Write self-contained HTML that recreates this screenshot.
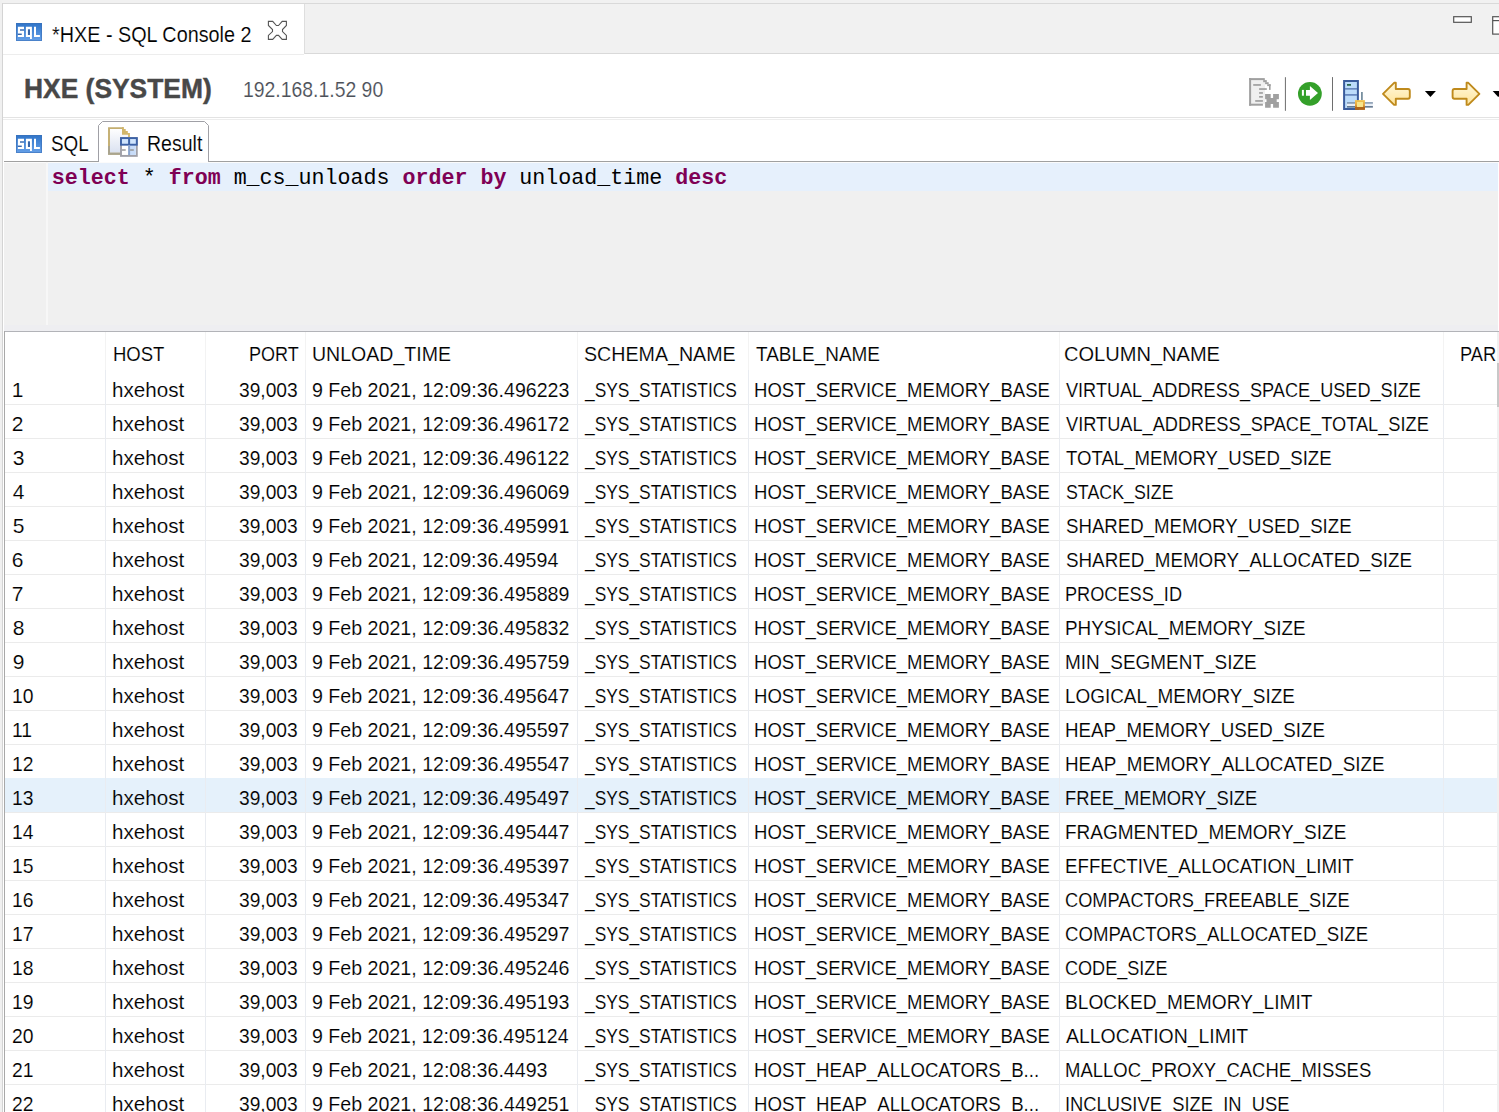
<!DOCTYPE html>
<html><head><meta charset="utf-8"><style>
html,body{margin:0;padding:0;}
body{width:1499px;height:1112px;overflow:hidden;position:relative;background:#fff;font-family:'Liberation Sans', sans-serif;}
.t{position:absolute;white-space:nowrap;line-height:1;transform-origin:0 0;}
.vl{position:absolute;width:1px;background:#e9ecf1;}
.hl{position:absolute;left:5px;width:1494px;height:1px;background:#ebebeb;}
.a{position:absolute;}
</style></head><body>
<!-- tab strip -->
<div class="a" style="left:0;top:0;width:1499px;height:54px;background:#f1f1f1"></div>
<div class="a" style="left:2px;top:3px;width:1497px;height:1px;background:#d9d9d9"></div>
<div class="a" style="left:3px;top:4px;width:301px;height:50px;background:#fff"></div>
<div class="a" style="left:304px;top:4px;width:1px;height:50px;background:#dedede"></div>
<div class="a" style="left:305px;top:53px;width:1194px;height:1px;background:#d9d9d9"></div>
<div class="a" style="left:3px;top:54px;width:301px;height:1px;background:#ededed"></div>
<!-- left frame -->
<div class="a" style="left:0;top:0;width:2px;height:1112px;background:#f0f0f0"></div>
<div class="a" style="left:2px;top:3px;width:1px;height:1109px;background:#d4d4d4"></div>
<!-- header lines -->
<div class="a" style="left:3px;top:117px;width:1496px;height:1px;background:#e3e3e3"></div>
<div class="a" style="left:3px;top:119px;width:1496px;height:1px;background:#ededed"></div>
<!-- subtab bar bottom line -->
<div class="a" style="left:4px;top:161px;width:1495px;height:1px;background:#a0a0a0"></div>
<!-- result tab -->
<svg class="a" style="left:0;top:0" width="300" height="170"><path d="M98.5 162 V125.5 L102.5 121.5 H204.5 L208.5 125.5 V162" fill="#fff" stroke="#a0a0a6" stroke-width="1"/></svg>
<!-- editor -->
<div class="a" style="left:4px;top:162px;width:1494px;height:168px;background:#f0f0f0"></div>
<div class="a" style="left:4px;top:162px;width:1494px;height:1px;background:#fbfbfb"></div>
<div class="a" style="left:48px;top:163px;width:1450px;height:28px;background:#e6f0fc"></div>
<div class="a" style="left:46px;top:162px;width:2px;height:163px;background:#f7f7f7"></div>
<div class="a" style="left:4px;top:325px;width:1494px;height:6px;background:#eeeef1"></div>
<!-- table -->
<div class="a" style="left:4px;top:331px;width:1495px;height:1px;background:#b2b3b8"></div>
<div class="a" style="left:4px;top:331px;width:1px;height:781px;background:#a8a8a8"></div>
<div class="hl" style="top:404px"></div><div class="hl" style="top:438px"></div><div class="hl" style="top:472px"></div><div class="hl" style="top:506px"></div><div class="hl" style="top:540px"></div><div class="hl" style="top:574px"></div><div class="hl" style="top:608px"></div><div class="hl" style="top:642px"></div><div class="hl" style="top:676px"></div><div class="hl" style="top:710px"></div><div class="hl" style="top:744px"></div><div class="hl" style="top:778px"></div><div class="hl" style="top:812px"></div><div class="hl" style="top:846px"></div><div class="hl" style="top:880px"></div><div class="hl" style="top:914px"></div><div class="hl" style="top:948px"></div><div class="hl" style="top:982px"></div><div class="hl" style="top:1016px"></div><div class="hl" style="top:1050px"></div><div class="hl" style="top:1084px"></div><div class="hl" style="top:1118px"></div>
<div style="position:absolute;left:5px;top:778px;width:1494px;height:34px;background:#e5f1fb"></div>
<div class="vl" style="left:105px;top:332px;height:38px;background:#f3f3f3"></div><div class="vl" style="left:105px;top:370px;height:742px"></div><div class="vl" style="left:205px;top:332px;height:38px;background:#f3f3f3"></div><div class="vl" style="left:205px;top:370px;height:742px"></div><div class="vl" style="left:305px;top:332px;height:38px;background:#f3f3f3"></div><div class="vl" style="left:305px;top:370px;height:742px"></div><div class="vl" style="left:577px;top:332px;height:38px;background:#f3f3f3"></div><div class="vl" style="left:577px;top:370px;height:742px"></div><div class="vl" style="left:748px;top:332px;height:38px;background:#f3f3f3"></div><div class="vl" style="left:748px;top:370px;height:742px"></div><div class="vl" style="left:1059px;top:332px;height:38px;background:#f3f3f3"></div><div class="vl" style="left:1059px;top:370px;height:742px"></div><div class="vl" style="left:1443px;top:332px;height:38px;background:#f3f3f3"></div><div class="vl" style="left:1443px;top:370px;height:742px"></div>
<div class="t" style="left:52.00px;top:23.88px;font-size:22px;font-weight:normal;color:#000;-webkit-text-stroke:0.15px #fff;transform:scaleX(0.8996);">*HXE - SQL Console 2</div><div class="t" style="left:24.36px;top:75.00px;font-size:28px;font-weight:bold;color:#484848;-webkit-text-stroke:0.45px #484848;transform:scaleX(0.9425);">HXE (SYSTEM)</div><div class="t" style="left:243.30px;top:79.80px;font-size:21.5px;font-weight:normal;color:#4c5058;-webkit-text-stroke:0.15px #fff;transform:scaleX(0.9018);">192.168.1.52 90</div><div class="t" style="left:51.44px;top:133.38px;font-size:22px;font-weight:normal;color:#000;-webkit-text-stroke:0.15px #fff;transform:scaleX(0.8554);">SQL</div><div class="t" style="left:146.61px;top:133.38px;font-size:22px;font-weight:normal;color:#000;-webkit-text-stroke:0.15px #fff;transform:scaleX(0.8882);">Result</div><div class="t" style="left:112.92px;top:343.02px;font-size:21px;font-weight:normal;color:#000;-webkit-text-stroke:0.15px #fff;transform:scaleX(0.8816);">HOST</div><div class="t" style="left:249.04px;top:343.02px;font-size:21px;font-weight:normal;color:#000;-webkit-text-stroke:0.15px #fff;transform:scaleX(0.8577);">PORT</div><div class="t" style="left:311.57px;top:343.02px;font-size:21px;font-weight:normal;color:#000;-webkit-text-stroke:0.15px #fff;transform:scaleX(0.9302);">UNLOAD_TIME</div><div class="t" style="left:584.20px;top:343.02px;font-size:21px;font-weight:normal;color:#000;-webkit-text-stroke:0.15px #fff;transform:scaleX(0.9347);">SCHEMA_NAME</div><div class="t" style="left:756.00px;top:343.02px;font-size:21px;font-weight:normal;color:#000;-webkit-text-stroke:0.15px #fff;transform:scaleX(0.9030);">TABLE_NAME</div><div class="t" style="left:1064.25px;top:343.02px;font-size:21px;font-weight:normal;color:#000;-webkit-text-stroke:0.15px #fff;transform:scaleX(0.9547);">COLUMN_NAME</div><div class="t" style="left:1459.73px;top:343.02px;font-size:21px;font-weight:normal;color:#000;-webkit-text-stroke:0.15px #fff;transform:scaleX(0.8701);">PAR</div><div class="t" style="left:11.80px;top:379.02px;font-size:21px;font-weight:normal;color:#000;-webkit-text-stroke:0.15px #fff;">1</div><div class="t" style="left:112.22px;top:379.02px;font-size:21px;font-weight:normal;color:#000;-webkit-text-stroke:0.15px #fff;transform:scaleX(0.9819);">hxehost</div><div class="t" style="left:238.70px;top:379.02px;font-size:21px;font-weight:normal;color:#000;-webkit-text-stroke:0.15px #fff;transform:scaleX(0.9142);">39,003</div><div class="t" style="left:312.20px;top:379.02px;font-size:21px;font-weight:normal;color:#000;-webkit-text-stroke:0.15px #fff;transform:scaleX(0.9342);">9 Feb 2021, 12:09:36.496223</div><div class="t" style="left:585.13px;top:379.02px;font-size:21px;font-weight:normal;color:#000;-webkit-text-stroke:0.15px #fff;transform:scaleX(0.8272);">_SYS_STATISTICS</div><div class="t" style="left:754.32px;top:379.02px;font-size:21px;font-weight:normal;color:#000;-webkit-text-stroke:0.15px #fff;transform:scaleX(0.8824);">HOST_SERVICE_MEMORY_BASE</div><div class="t" style="left:1065.60px;top:379.02px;font-size:21px;font-weight:normal;color:#000;-webkit-text-stroke:0.15px #fff;transform:scaleX(0.8629);">VIRTUAL_ADDRESS_SPACE_USED_SIZE</div><div class="t" style="left:11.80px;top:413.02px;font-size:21px;font-weight:normal;color:#000;-webkit-text-stroke:0.15px #fff;">2</div><div class="t" style="left:112.22px;top:413.02px;font-size:21px;font-weight:normal;color:#000;-webkit-text-stroke:0.15px #fff;transform:scaleX(0.9819);">hxehost</div><div class="t" style="left:238.70px;top:413.02px;font-size:21px;font-weight:normal;color:#000;-webkit-text-stroke:0.15px #fff;transform:scaleX(0.9142);">39,003</div><div class="t" style="left:312.20px;top:413.02px;font-size:21px;font-weight:normal;color:#000;-webkit-text-stroke:0.15px #fff;transform:scaleX(0.9342);">9 Feb 2021, 12:09:36.496172</div><div class="t" style="left:585.13px;top:413.02px;font-size:21px;font-weight:normal;color:#000;-webkit-text-stroke:0.15px #fff;transform:scaleX(0.8272);">_SYS_STATISTICS</div><div class="t" style="left:754.32px;top:413.02px;font-size:21px;font-weight:normal;color:#000;-webkit-text-stroke:0.15px #fff;transform:scaleX(0.8824);">HOST_SERVICE_MEMORY_BASE</div><div class="t" style="left:1065.60px;top:413.02px;font-size:21px;font-weight:normal;color:#000;-webkit-text-stroke:0.15px #fff;transform:scaleX(0.8667);">VIRTUAL_ADDRESS_SPACE_TOTAL_SIZE</div><div class="t" style="left:12.80px;top:447.02px;font-size:21px;font-weight:normal;color:#000;-webkit-text-stroke:0.15px #fff;">3</div><div class="t" style="left:112.22px;top:447.02px;font-size:21px;font-weight:normal;color:#000;-webkit-text-stroke:0.15px #fff;transform:scaleX(0.9819);">hxehost</div><div class="t" style="left:238.70px;top:447.02px;font-size:21px;font-weight:normal;color:#000;-webkit-text-stroke:0.15px #fff;transform:scaleX(0.9142);">39,003</div><div class="t" style="left:312.20px;top:447.02px;font-size:21px;font-weight:normal;color:#000;-webkit-text-stroke:0.15px #fff;transform:scaleX(0.9342);">9 Feb 2021, 12:09:36.496122</div><div class="t" style="left:585.13px;top:447.02px;font-size:21px;font-weight:normal;color:#000;-webkit-text-stroke:0.15px #fff;transform:scaleX(0.8272);">_SYS_STATISTICS</div><div class="t" style="left:754.32px;top:447.02px;font-size:21px;font-weight:normal;color:#000;-webkit-text-stroke:0.15px #fff;transform:scaleX(0.8824);">HOST_SERVICE_MEMORY_BASE</div><div class="t" style="left:1065.60px;top:447.02px;font-size:21px;font-weight:normal;color:#000;-webkit-text-stroke:0.15px #fff;transform:scaleX(0.8856);">TOTAL_MEMORY_USED_SIZE</div><div class="t" style="left:12.80px;top:481.02px;font-size:21px;font-weight:normal;color:#000;-webkit-text-stroke:0.15px #fff;">4</div><div class="t" style="left:112.22px;top:481.02px;font-size:21px;font-weight:normal;color:#000;-webkit-text-stroke:0.15px #fff;transform:scaleX(0.9819);">hxehost</div><div class="t" style="left:238.70px;top:481.02px;font-size:21px;font-weight:normal;color:#000;-webkit-text-stroke:0.15px #fff;transform:scaleX(0.9142);">39,003</div><div class="t" style="left:312.20px;top:481.02px;font-size:21px;font-weight:normal;color:#000;-webkit-text-stroke:0.15px #fff;transform:scaleX(0.9342);">9 Feb 2021, 12:09:36.496069</div><div class="t" style="left:585.13px;top:481.02px;font-size:21px;font-weight:normal;color:#000;-webkit-text-stroke:0.15px #fff;transform:scaleX(0.8272);">_SYS_STATISTICS</div><div class="t" style="left:754.32px;top:481.02px;font-size:21px;font-weight:normal;color:#000;-webkit-text-stroke:0.15px #fff;transform:scaleX(0.8824);">HOST_SERVICE_MEMORY_BASE</div><div class="t" style="left:1065.60px;top:481.02px;font-size:21px;font-weight:normal;color:#000;-webkit-text-stroke:0.15px #fff;transform:scaleX(0.8478);">STACK_SIZE</div><div class="t" style="left:12.80px;top:515.02px;font-size:21px;font-weight:normal;color:#000;-webkit-text-stroke:0.15px #fff;">5</div><div class="t" style="left:112.22px;top:515.02px;font-size:21px;font-weight:normal;color:#000;-webkit-text-stroke:0.15px #fff;transform:scaleX(0.9819);">hxehost</div><div class="t" style="left:238.70px;top:515.02px;font-size:21px;font-weight:normal;color:#000;-webkit-text-stroke:0.15px #fff;transform:scaleX(0.9142);">39,003</div><div class="t" style="left:312.20px;top:515.02px;font-size:21px;font-weight:normal;color:#000;-webkit-text-stroke:0.15px #fff;transform:scaleX(0.9342);">9 Feb 2021, 12:09:36.495991</div><div class="t" style="left:585.13px;top:515.02px;font-size:21px;font-weight:normal;color:#000;-webkit-text-stroke:0.15px #fff;transform:scaleX(0.8272);">_SYS_STATISTICS</div><div class="t" style="left:754.32px;top:515.02px;font-size:21px;font-weight:normal;color:#000;-webkit-text-stroke:0.15px #fff;transform:scaleX(0.8824);">HOST_SERVICE_MEMORY_BASE</div><div class="t" style="left:1065.60px;top:515.02px;font-size:21px;font-weight:normal;color:#000;-webkit-text-stroke:0.15px #fff;transform:scaleX(0.8878);">SHARED_MEMORY_USED_SIZE</div><div class="t" style="left:11.80px;top:549.02px;font-size:21px;font-weight:normal;color:#000;-webkit-text-stroke:0.15px #fff;">6</div><div class="t" style="left:112.22px;top:549.02px;font-size:21px;font-weight:normal;color:#000;-webkit-text-stroke:0.15px #fff;transform:scaleX(0.9819);">hxehost</div><div class="t" style="left:238.70px;top:549.02px;font-size:21px;font-weight:normal;color:#000;-webkit-text-stroke:0.15px #fff;transform:scaleX(0.9142);">39,003</div><div class="t" style="left:312.20px;top:549.02px;font-size:21px;font-weight:normal;color:#000;-webkit-text-stroke:0.15px #fff;transform:scaleX(0.9333);">9 Feb 2021, 12:09:36.49594</div><div class="t" style="left:585.13px;top:549.02px;font-size:21px;font-weight:normal;color:#000;-webkit-text-stroke:0.15px #fff;transform:scaleX(0.8272);">_SYS_STATISTICS</div><div class="t" style="left:754.32px;top:549.02px;font-size:21px;font-weight:normal;color:#000;-webkit-text-stroke:0.15px #fff;transform:scaleX(0.8824);">HOST_SERVICE_MEMORY_BASE</div><div class="t" style="left:1065.60px;top:549.02px;font-size:21px;font-weight:normal;color:#000;-webkit-text-stroke:0.15px #fff;transform:scaleX(0.8948);">SHARED_MEMORY_ALLOCATED_SIZE</div><div class="t" style="left:11.80px;top:583.02px;font-size:21px;font-weight:normal;color:#000;-webkit-text-stroke:0.15px #fff;">7</div><div class="t" style="left:112.22px;top:583.02px;font-size:21px;font-weight:normal;color:#000;-webkit-text-stroke:0.15px #fff;transform:scaleX(0.9819);">hxehost</div><div class="t" style="left:238.70px;top:583.02px;font-size:21px;font-weight:normal;color:#000;-webkit-text-stroke:0.15px #fff;transform:scaleX(0.9142);">39,003</div><div class="t" style="left:312.20px;top:583.02px;font-size:21px;font-weight:normal;color:#000;-webkit-text-stroke:0.15px #fff;transform:scaleX(0.9342);">9 Feb 2021, 12:09:36.495889</div><div class="t" style="left:585.13px;top:583.02px;font-size:21px;font-weight:normal;color:#000;-webkit-text-stroke:0.15px #fff;transform:scaleX(0.8272);">_SYS_STATISTICS</div><div class="t" style="left:754.32px;top:583.02px;font-size:21px;font-weight:normal;color:#000;-webkit-text-stroke:0.15px #fff;transform:scaleX(0.8824);">HOST_SERVICE_MEMORY_BASE</div><div class="t" style="left:1064.74px;top:583.02px;font-size:21px;font-weight:normal;color:#000;-webkit-text-stroke:0.15px #fff;transform:scaleX(0.8643);">PROCESS_ID</div><div class="t" style="left:12.80px;top:617.02px;font-size:21px;font-weight:normal;color:#000;-webkit-text-stroke:0.15px #fff;">8</div><div class="t" style="left:112.22px;top:617.02px;font-size:21px;font-weight:normal;color:#000;-webkit-text-stroke:0.15px #fff;transform:scaleX(0.9819);">hxehost</div><div class="t" style="left:238.70px;top:617.02px;font-size:21px;font-weight:normal;color:#000;-webkit-text-stroke:0.15px #fff;transform:scaleX(0.9142);">39,003</div><div class="t" style="left:312.20px;top:617.02px;font-size:21px;font-weight:normal;color:#000;-webkit-text-stroke:0.15px #fff;transform:scaleX(0.9342);">9 Feb 2021, 12:09:36.495832</div><div class="t" style="left:585.13px;top:617.02px;font-size:21px;font-weight:normal;color:#000;-webkit-text-stroke:0.15px #fff;transform:scaleX(0.8272);">_SYS_STATISTICS</div><div class="t" style="left:754.32px;top:617.02px;font-size:21px;font-weight:normal;color:#000;-webkit-text-stroke:0.15px #fff;transform:scaleX(0.8824);">HOST_SERVICE_MEMORY_BASE</div><div class="t" style="left:1064.70px;top:617.02px;font-size:21px;font-weight:normal;color:#000;-webkit-text-stroke:0.15px #fff;transform:scaleX(0.8973);">PHYSICAL_MEMORY_SIZE</div><div class="t" style="left:12.80px;top:651.02px;font-size:21px;font-weight:normal;color:#000;-webkit-text-stroke:0.15px #fff;">9</div><div class="t" style="left:112.22px;top:651.02px;font-size:21px;font-weight:normal;color:#000;-webkit-text-stroke:0.15px #fff;transform:scaleX(0.9819);">hxehost</div><div class="t" style="left:238.70px;top:651.02px;font-size:21px;font-weight:normal;color:#000;-webkit-text-stroke:0.15px #fff;transform:scaleX(0.9142);">39,003</div><div class="t" style="left:312.20px;top:651.02px;font-size:21px;font-weight:normal;color:#000;-webkit-text-stroke:0.15px #fff;transform:scaleX(0.9342);">9 Feb 2021, 12:09:36.495759</div><div class="t" style="left:585.13px;top:651.02px;font-size:21px;font-weight:normal;color:#000;-webkit-text-stroke:0.15px #fff;transform:scaleX(0.8272);">_SYS_STATISTICS</div><div class="t" style="left:754.32px;top:651.02px;font-size:21px;font-weight:normal;color:#000;-webkit-text-stroke:0.15px #fff;transform:scaleX(0.8824);">HOST_SERVICE_MEMORY_BASE</div><div class="t" style="left:1064.70px;top:651.02px;font-size:21px;font-weight:normal;color:#000;-webkit-text-stroke:0.15px #fff;transform:scaleX(0.9022);">MIN_SEGMENT_SIZE</div><div class="t" style="left:11.88px;top:685.02px;font-size:21px;font-weight:normal;color:#000;-webkit-text-stroke:0.15px #fff;transform:scaleX(0.9200);">10</div><div class="t" style="left:112.22px;top:685.02px;font-size:21px;font-weight:normal;color:#000;-webkit-text-stroke:0.15px #fff;transform:scaleX(0.9819);">hxehost</div><div class="t" style="left:238.70px;top:685.02px;font-size:21px;font-weight:normal;color:#000;-webkit-text-stroke:0.15px #fff;transform:scaleX(0.9142);">39,003</div><div class="t" style="left:312.20px;top:685.02px;font-size:21px;font-weight:normal;color:#000;-webkit-text-stroke:0.15px #fff;transform:scaleX(0.9342);">9 Feb 2021, 12:09:36.495647</div><div class="t" style="left:585.13px;top:685.02px;font-size:21px;font-weight:normal;color:#000;-webkit-text-stroke:0.15px #fff;transform:scaleX(0.8272);">_SYS_STATISTICS</div><div class="t" style="left:754.32px;top:685.02px;font-size:21px;font-weight:normal;color:#000;-webkit-text-stroke:0.15px #fff;transform:scaleX(0.8824);">HOST_SERVICE_MEMORY_BASE</div><div class="t" style="left:1064.70px;top:685.02px;font-size:21px;font-weight:normal;color:#000;-webkit-text-stroke:0.15px #fff;transform:scaleX(0.9009);">LOGICAL_MEMORY_SIZE</div><div class="t" style="left:11.88px;top:719.02px;font-size:21px;font-weight:normal;color:#000;-webkit-text-stroke:0.15px #fff;transform:scaleX(0.9200);">11</div><div class="t" style="left:112.22px;top:719.02px;font-size:21px;font-weight:normal;color:#000;-webkit-text-stroke:0.15px #fff;transform:scaleX(0.9819);">hxehost</div><div class="t" style="left:238.70px;top:719.02px;font-size:21px;font-weight:normal;color:#000;-webkit-text-stroke:0.15px #fff;transform:scaleX(0.9142);">39,003</div><div class="t" style="left:312.20px;top:719.02px;font-size:21px;font-weight:normal;color:#000;-webkit-text-stroke:0.15px #fff;transform:scaleX(0.9342);">9 Feb 2021, 12:09:36.495597</div><div class="t" style="left:585.13px;top:719.02px;font-size:21px;font-weight:normal;color:#000;-webkit-text-stroke:0.15px #fff;transform:scaleX(0.8272);">_SYS_STATISTICS</div><div class="t" style="left:754.32px;top:719.02px;font-size:21px;font-weight:normal;color:#000;-webkit-text-stroke:0.15px #fff;transform:scaleX(0.8824);">HOST_SERVICE_MEMORY_BASE</div><div class="t" style="left:1064.71px;top:719.02px;font-size:21px;font-weight:normal;color:#000;-webkit-text-stroke:0.15px #fff;transform:scaleX(0.8920);">HEAP_MEMORY_USED_SIZE</div><div class="t" style="left:11.88px;top:753.02px;font-size:21px;font-weight:normal;color:#000;-webkit-text-stroke:0.15px #fff;transform:scaleX(0.9200);">12</div><div class="t" style="left:112.22px;top:753.02px;font-size:21px;font-weight:normal;color:#000;-webkit-text-stroke:0.15px #fff;transform:scaleX(0.9819);">hxehost</div><div class="t" style="left:238.70px;top:753.02px;font-size:21px;font-weight:normal;color:#000;-webkit-text-stroke:0.15px #fff;transform:scaleX(0.9142);">39,003</div><div class="t" style="left:312.20px;top:753.02px;font-size:21px;font-weight:normal;color:#000;-webkit-text-stroke:0.15px #fff;transform:scaleX(0.9342);">9 Feb 2021, 12:09:36.495547</div><div class="t" style="left:585.13px;top:753.02px;font-size:21px;font-weight:normal;color:#000;-webkit-text-stroke:0.15px #fff;transform:scaleX(0.8272);">_SYS_STATISTICS</div><div class="t" style="left:754.32px;top:753.02px;font-size:21px;font-weight:normal;color:#000;-webkit-text-stroke:0.15px #fff;transform:scaleX(0.8824);">HOST_SERVICE_MEMORY_BASE</div><div class="t" style="left:1064.70px;top:753.02px;font-size:21px;font-weight:normal;color:#000;-webkit-text-stroke:0.15px #fff;transform:scaleX(0.8969);">HEAP_MEMORY_ALLOCATED_SIZE</div><div class="t" style="left:11.88px;top:787.02px;font-size:21px;font-weight:normal;color:#000;-webkit-text-stroke:0.15px #e5f1fb;transform:scaleX(0.9200);">13</div><div class="t" style="left:112.22px;top:787.02px;font-size:21px;font-weight:normal;color:#000;-webkit-text-stroke:0.15px #e5f1fb;transform:scaleX(0.9819);">hxehost</div><div class="t" style="left:238.70px;top:787.02px;font-size:21px;font-weight:normal;color:#000;-webkit-text-stroke:0.15px #e5f1fb;transform:scaleX(0.9142);">39,003</div><div class="t" style="left:312.20px;top:787.02px;font-size:21px;font-weight:normal;color:#000;-webkit-text-stroke:0.15px #e5f1fb;transform:scaleX(0.9342);">9 Feb 2021, 12:09:36.495497</div><div class="t" style="left:585.13px;top:787.02px;font-size:21px;font-weight:normal;color:#000;-webkit-text-stroke:0.15px #e5f1fb;transform:scaleX(0.8272);">_SYS_STATISTICS</div><div class="t" style="left:754.32px;top:787.02px;font-size:21px;font-weight:normal;color:#000;-webkit-text-stroke:0.15px #e5f1fb;transform:scaleX(0.8824);">HOST_SERVICE_MEMORY_BASE</div><div class="t" style="left:1064.73px;top:787.02px;font-size:21px;font-weight:normal;color:#000;-webkit-text-stroke:0.15px #e5f1fb;transform:scaleX(0.8729);">FREE_MEMORY_SIZE</div><div class="t" style="left:11.88px;top:821.02px;font-size:21px;font-weight:normal;color:#000;-webkit-text-stroke:0.15px #fff;transform:scaleX(0.9200);">14</div><div class="t" style="left:112.22px;top:821.02px;font-size:21px;font-weight:normal;color:#000;-webkit-text-stroke:0.15px #fff;transform:scaleX(0.9819);">hxehost</div><div class="t" style="left:238.70px;top:821.02px;font-size:21px;font-weight:normal;color:#000;-webkit-text-stroke:0.15px #fff;transform:scaleX(0.9142);">39,003</div><div class="t" style="left:312.20px;top:821.02px;font-size:21px;font-weight:normal;color:#000;-webkit-text-stroke:0.15px #fff;transform:scaleX(0.9342);">9 Feb 2021, 12:09:36.495447</div><div class="t" style="left:585.13px;top:821.02px;font-size:21px;font-weight:normal;color:#000;-webkit-text-stroke:0.15px #fff;transform:scaleX(0.8272);">_SYS_STATISTICS</div><div class="t" style="left:754.32px;top:821.02px;font-size:21px;font-weight:normal;color:#000;-webkit-text-stroke:0.15px #fff;transform:scaleX(0.8824);">HOST_SERVICE_MEMORY_BASE</div><div class="t" style="left:1064.70px;top:821.02px;font-size:21px;font-weight:normal;color:#000;-webkit-text-stroke:0.15px #fff;transform:scaleX(0.9041);">FRAGMENTED_MEMORY_SIZE</div><div class="t" style="left:11.88px;top:855.02px;font-size:21px;font-weight:normal;color:#000;-webkit-text-stroke:0.15px #fff;transform:scaleX(0.9200);">15</div><div class="t" style="left:112.22px;top:855.02px;font-size:21px;font-weight:normal;color:#000;-webkit-text-stroke:0.15px #fff;transform:scaleX(0.9819);">hxehost</div><div class="t" style="left:238.70px;top:855.02px;font-size:21px;font-weight:normal;color:#000;-webkit-text-stroke:0.15px #fff;transform:scaleX(0.9142);">39,003</div><div class="t" style="left:312.20px;top:855.02px;font-size:21px;font-weight:normal;color:#000;-webkit-text-stroke:0.15px #fff;transform:scaleX(0.9342);">9 Feb 2021, 12:09:36.495397</div><div class="t" style="left:585.13px;top:855.02px;font-size:21px;font-weight:normal;color:#000;-webkit-text-stroke:0.15px #fff;transform:scaleX(0.8272);">_SYS_STATISTICS</div><div class="t" style="left:754.32px;top:855.02px;font-size:21px;font-weight:normal;color:#000;-webkit-text-stroke:0.15px #fff;transform:scaleX(0.8824);">HOST_SERVICE_MEMORY_BASE</div><div class="t" style="left:1064.71px;top:855.02px;font-size:21px;font-weight:normal;color:#000;-webkit-text-stroke:0.15px #fff;transform:scaleX(0.8911);">EFFECTIVE_ALLOCATION_LIMIT</div><div class="t" style="left:11.88px;top:889.02px;font-size:21px;font-weight:normal;color:#000;-webkit-text-stroke:0.15px #fff;transform:scaleX(0.9200);">16</div><div class="t" style="left:112.22px;top:889.02px;font-size:21px;font-weight:normal;color:#000;-webkit-text-stroke:0.15px #fff;transform:scaleX(0.9819);">hxehost</div><div class="t" style="left:238.70px;top:889.02px;font-size:21px;font-weight:normal;color:#000;-webkit-text-stroke:0.15px #fff;transform:scaleX(0.9142);">39,003</div><div class="t" style="left:312.20px;top:889.02px;font-size:21px;font-weight:normal;color:#000;-webkit-text-stroke:0.15px #fff;transform:scaleX(0.9342);">9 Feb 2021, 12:09:36.495347</div><div class="t" style="left:585.13px;top:889.02px;font-size:21px;font-weight:normal;color:#000;-webkit-text-stroke:0.15px #fff;transform:scaleX(0.8272);">_SYS_STATISTICS</div><div class="t" style="left:754.32px;top:889.02px;font-size:21px;font-weight:normal;color:#000;-webkit-text-stroke:0.15px #fff;transform:scaleX(0.8824);">HOST_SERVICE_MEMORY_BASE</div><div class="t" style="left:1064.73px;top:889.02px;font-size:21px;font-weight:normal;color:#000;-webkit-text-stroke:0.15px #fff;transform:scaleX(0.8668);">COMPACTORS_FREEABLE_SIZE</div><div class="t" style="left:11.88px;top:923.02px;font-size:21px;font-weight:normal;color:#000;-webkit-text-stroke:0.15px #fff;transform:scaleX(0.9200);">17</div><div class="t" style="left:112.22px;top:923.02px;font-size:21px;font-weight:normal;color:#000;-webkit-text-stroke:0.15px #fff;transform:scaleX(0.9819);">hxehost</div><div class="t" style="left:238.70px;top:923.02px;font-size:21px;font-weight:normal;color:#000;-webkit-text-stroke:0.15px #fff;transform:scaleX(0.9142);">39,003</div><div class="t" style="left:312.20px;top:923.02px;font-size:21px;font-weight:normal;color:#000;-webkit-text-stroke:0.15px #fff;transform:scaleX(0.9342);">9 Feb 2021, 12:09:36.495297</div><div class="t" style="left:585.13px;top:923.02px;font-size:21px;font-weight:normal;color:#000;-webkit-text-stroke:0.15px #fff;transform:scaleX(0.8272);">_SYS_STATISTICS</div><div class="t" style="left:754.32px;top:923.02px;font-size:21px;font-weight:normal;color:#000;-webkit-text-stroke:0.15px #fff;transform:scaleX(0.8824);">HOST_SERVICE_MEMORY_BASE</div><div class="t" style="left:1064.71px;top:923.02px;font-size:21px;font-weight:normal;color:#000;-webkit-text-stroke:0.15px #fff;transform:scaleX(0.8865);">COMPACTORS_ALLOCATED_SIZE</div><div class="t" style="left:11.88px;top:957.02px;font-size:21px;font-weight:normal;color:#000;-webkit-text-stroke:0.15px #fff;transform:scaleX(0.9200);">18</div><div class="t" style="left:112.22px;top:957.02px;font-size:21px;font-weight:normal;color:#000;-webkit-text-stroke:0.15px #fff;transform:scaleX(0.9819);">hxehost</div><div class="t" style="left:238.70px;top:957.02px;font-size:21px;font-weight:normal;color:#000;-webkit-text-stroke:0.15px #fff;transform:scaleX(0.9142);">39,003</div><div class="t" style="left:312.20px;top:957.02px;font-size:21px;font-weight:normal;color:#000;-webkit-text-stroke:0.15px #fff;transform:scaleX(0.9342);">9 Feb 2021, 12:09:36.495246</div><div class="t" style="left:585.13px;top:957.02px;font-size:21px;font-weight:normal;color:#000;-webkit-text-stroke:0.15px #fff;transform:scaleX(0.8272);">_SYS_STATISTICS</div><div class="t" style="left:754.32px;top:957.02px;font-size:21px;font-weight:normal;color:#000;-webkit-text-stroke:0.15px #fff;transform:scaleX(0.8824);">HOST_SERVICE_MEMORY_BASE</div><div class="t" style="left:1064.74px;top:957.02px;font-size:21px;font-weight:normal;color:#000;-webkit-text-stroke:0.15px #fff;transform:scaleX(0.8609);">CODE_SIZE</div><div class="t" style="left:11.88px;top:991.02px;font-size:21px;font-weight:normal;color:#000;-webkit-text-stroke:0.15px #fff;transform:scaleX(0.9200);">19</div><div class="t" style="left:112.22px;top:991.02px;font-size:21px;font-weight:normal;color:#000;-webkit-text-stroke:0.15px #fff;transform:scaleX(0.9819);">hxehost</div><div class="t" style="left:238.70px;top:991.02px;font-size:21px;font-weight:normal;color:#000;-webkit-text-stroke:0.15px #fff;transform:scaleX(0.9142);">39,003</div><div class="t" style="left:312.20px;top:991.02px;font-size:21px;font-weight:normal;color:#000;-webkit-text-stroke:0.15px #fff;transform:scaleX(0.9342);">9 Feb 2021, 12:09:36.495193</div><div class="t" style="left:585.13px;top:991.02px;font-size:21px;font-weight:normal;color:#000;-webkit-text-stroke:0.15px #fff;transform:scaleX(0.8272);">_SYS_STATISTICS</div><div class="t" style="left:754.32px;top:991.02px;font-size:21px;font-weight:normal;color:#000;-webkit-text-stroke:0.15px #fff;transform:scaleX(0.8824);">HOST_SERVICE_MEMORY_BASE</div><div class="t" style="left:1064.69px;top:991.02px;font-size:21px;font-weight:normal;color:#000;-webkit-text-stroke:0.15px #fff;transform:scaleX(0.9114);">BLOCKED_MEMORY_LIMIT</div><div class="t" style="left:11.88px;top:1025.02px;font-size:21px;font-weight:normal;color:#000;-webkit-text-stroke:0.15px #fff;transform:scaleX(0.9200);">20</div><div class="t" style="left:112.22px;top:1025.02px;font-size:21px;font-weight:normal;color:#000;-webkit-text-stroke:0.15px #fff;transform:scaleX(0.9819);">hxehost</div><div class="t" style="left:238.70px;top:1025.02px;font-size:21px;font-weight:normal;color:#000;-webkit-text-stroke:0.15px #fff;transform:scaleX(0.9142);">39,003</div><div class="t" style="left:312.20px;top:1025.02px;font-size:21px;font-weight:normal;color:#000;-webkit-text-stroke:0.15px #fff;transform:scaleX(0.9308);">9 Feb 2021, 12:09:36.495124</div><div class="t" style="left:585.13px;top:1025.02px;font-size:21px;font-weight:normal;color:#000;-webkit-text-stroke:0.15px #fff;transform:scaleX(0.8272);">_SYS_STATISTICS</div><div class="t" style="left:754.32px;top:1025.02px;font-size:21px;font-weight:normal;color:#000;-webkit-text-stroke:0.15px #fff;transform:scaleX(0.8824);">HOST_SERVICE_MEMORY_BASE</div><div class="t" style="left:1065.60px;top:1025.02px;font-size:21px;font-weight:normal;color:#000;-webkit-text-stroke:0.15px #fff;transform:scaleX(0.9259);">ALLOCATION_LIMIT</div><div class="t" style="left:11.88px;top:1059.02px;font-size:21px;font-weight:normal;color:#000;-webkit-text-stroke:0.15px #fff;transform:scaleX(0.9200);">21</div><div class="t" style="left:112.22px;top:1059.02px;font-size:21px;font-weight:normal;color:#000;-webkit-text-stroke:0.15px #fff;transform:scaleX(0.9819);">hxehost</div><div class="t" style="left:238.70px;top:1059.02px;font-size:21px;font-weight:normal;color:#000;-webkit-text-stroke:0.15px #fff;transform:scaleX(0.9142);">39,003</div><div class="t" style="left:312.20px;top:1059.02px;font-size:21px;font-weight:normal;color:#000;-webkit-text-stroke:0.15px #fff;transform:scaleX(0.9335);">9 Feb 2021, 12:08:36.4493</div><div class="t" style="left:585.13px;top:1059.02px;font-size:21px;font-weight:normal;color:#000;-webkit-text-stroke:0.15px #fff;transform:scaleX(0.8272);">_SYS_STATISTICS</div><div class="t" style="left:754.31px;top:1059.02px;font-size:21px;font-weight:normal;color:#000;-webkit-text-stroke:0.15px #fff;transform:scaleX(0.8873);">HOST_HEAP_ALLOCATORS_B...</div><div class="t" style="left:1064.72px;top:1059.02px;font-size:21px;font-weight:normal;color:#000;-webkit-text-stroke:0.15px #fff;transform:scaleX(0.8807);">MALLOC_PROXY_CACHE_MISSES</div><div class="t" style="left:11.88px;top:1093.02px;font-size:21px;font-weight:normal;color:#000;-webkit-text-stroke:0.15px #fff;transform:scaleX(0.9200);">22</div><div class="t" style="left:112.22px;top:1093.02px;font-size:21px;font-weight:normal;color:#000;-webkit-text-stroke:0.15px #fff;transform:scaleX(0.9819);">hxehost</div><div class="t" style="left:238.70px;top:1093.02px;font-size:21px;font-weight:normal;color:#000;-webkit-text-stroke:0.15px #fff;transform:scaleX(0.9142);">39,003</div><div class="t" style="left:312.20px;top:1093.02px;font-size:21px;font-weight:normal;color:#000;-webkit-text-stroke:0.15px #fff;transform:scaleX(0.9342);">9 Feb 2021, 12:08:36.449251</div><div class="t" style="left:585.13px;top:1093.02px;font-size:21px;font-weight:normal;color:#000;-webkit-text-stroke:0.15px #fff;transform:scaleX(0.8272);">_SYS_STATISTICS</div><div class="t" style="left:754.31px;top:1093.02px;font-size:21px;font-weight:normal;color:#000;-webkit-text-stroke:0.15px #fff;transform:scaleX(0.8873);">HOST_HEAP_ALLOCATORS_B...</div><div class="t" style="left:1064.73px;top:1093.02px;font-size:21px;font-weight:normal;color:#000;-webkit-text-stroke:0.15px #fff;transform:scaleX(0.8743);">INCLUSIVE_SIZE_IN_USE</div>
<!-- editor text -->
<div class="t" style="left:51.8px;top:168.42px;font-family:'Liberation Mono', monospace;font-size:21.65px;color:#000"><b style="color:#7f0055">select</b> * <b style="color:#7f0055">from</b> m_cs_unloads <b style="color:#7f0055">order</b> <b style="color:#7f0055">by</b> unload_time <b style="color:#7f0055">desc</b></div>
<svg class="a" style="left:0;top:0" width="1499" height="1112" viewBox="0 0 1499 1112" shape-rendering="geometricPrecision">
<defs>
  <linearGradient id="sqlg" x1="0" y1="0" x2="0" y2="1">
    <stop offset="0" stop-color="#2f74c8"/><stop offset="1" stop-color="#65a0e8"/>
  </linearGradient>
  <linearGradient id="arrg" x1="0" y1="0" x2="0" y2="1">
    <stop offset="0" stop-color="#fff8dc"/><stop offset="1" stop-color="#ffe49a"/>
  </linearGradient>
  <linearGradient id="docg" x1="0" y1="0" x2="0" y2="1">
    <stop offset="0" stop-color="#ffffff"/><stop offset="1" stop-color="#d8e0f0"/>
  </linearGradient>
  <linearGradient id="plugg" x1="0" y1="0" x2="0" y2="1">
    <stop offset="0" stop-color="#f2c650"/><stop offset="0.45" stop-color="#e8a840"/><stop offset="1" stop-color="#a85a14"/>
  </linearGradient>
  <g id="sqlicon">
    <rect x="0" y="0" width="26" height="18" fill="url(#sqlg)"/>
    <rect x="0.5" y="0.5" width="25" height="17" fill="none" stroke="#3b70b8" stroke-width="1" opacity="0.6"/>
    <rect x="4" y="6.3" width="4" height="1.5" fill="#3a66a6"/>
    <rect x="1.9" y="10.5" width="3.9" height="1.5" fill="#3a66a6"/>
    <rect x="11.9" y="6.3" width="2.1" height="5.6" fill="#3a66a6"/>
    <!-- S -->
    <path d="M1.9 3.8 H8 V6.3 H4 V7.8 H8 V14 H1.9 V12 H5.8 V10.5 H1.9 Z" fill="#fff"/>
    <!-- Q -->
    <path d="M9.9 3.8 H15.9 V16 H14 V14 H9.9 Z M11.9 6.3 V11.9 H14 V6.3 Z" fill="#fff" fill-rule="evenodd"/>
    <!-- L -->
    <path d="M18 3.8 H20 V11.9 H23.9 V14 H18 Z" fill="#fff"/>
  </g>
</defs>

<!-- tab SQL icon -->
<use href="#sqlicon" x="16" y="23"/>
<!-- sub-tab SQL icon -->
<use href="#sqlicon" x="16" y="135"/>

<!-- close X -->
<polygon points="268.4,21.4 272.7,21.4 276.4,25.5 278.5,25.5 282.2,21.4 286.4,21.4 286.4,25.5 282.5,29.5 282.5,31.6 286.4,35.4 286.4,39.4 282.2,39.4 278.5,35.4 276.4,35.4 272.7,39.4 268.4,39.4 268.4,35.4 272.5,31.6 272.5,29.5 268.4,25.5" fill="#fff" stroke="#555" stroke-width="1.1" stroke-linejoin="miter"/>

<!-- minimize / maximize -->
<rect x="1453.7" y="16.7" width="17.6" height="5.6" fill="#fff" stroke="#555" stroke-width="1.2"/>
<rect x="1492.7" y="16.7" width="20" height="17.4" fill="#fff" stroke="#555" stroke-width="1.2"/>
<line x1="1492.7" y1="20.6" x2="1499" y2="20.6" stroke="#555" stroke-width="1.2"/>

<!-- Result icon -->
<path d="M109 128.1 H123.5 L129 133.6 V154 H109 Z" fill="url(#docg)"/>
<path d="M123.7 128.1 H109 V153.8 H121" fill="none" stroke="#c4ae70" stroke-width="1.9"/>
<path d="M109 146 V153.8 H121" fill="none" stroke="#a8a490" stroke-width="1.9"/>
<polygon points="122,127.1 123.7,127.1 123.7,129 125.7,129 125.7,131 127.8,131 127.8,132.9 129.9,132.9 129.9,137.3 128.1,137.3 128.1,134.7 122,134.7" fill="#d2b66a"/>
<rect x="121" y="138.1" width="15.8" height="17.8" fill="#fff" stroke="#a0a0a8" stroke-width="1.9"/>
<rect x="129.8" y="145" width="6" height="10" fill="#c8dcf8"/>
<rect x="121" y="138.1" width="15.8" height="6.6" fill="#cfe4fc" stroke="#3c62a6" stroke-width="1.9"/>
<rect x="128.1" y="138" width="2" height="7" fill="#3c62a6"/>
<rect x="128.1" y="145" width="2" height="10" fill="#8aa4cc"/>
<rect x="122" y="149.3" width="3.7" height="1.4" fill="#909090"/>
<rect x="130.1" y="149.3" width="3.7" height="1.4" fill="#909090"/>

<!-- toolbar: gray doc with X -->
<rect x="1250" y="79" width="15" height="25" fill="#f0f0f0"/>
<rect x="1249.1" y="78.1" width="15.7" height="2" fill="#a0a0a0"/>
<rect x="1249.1" y="78.1" width="2" height="27.6" fill="#a0a0a0"/>
<rect x="1249.1" y="103.7" width="13.8" height="2" fill="#a0a0a0"/>
<rect x="1263.2" y="80.1" width="3.6" height="2.1" fill="#a0a0a0"/>
<rect x="1265.1" y="82.2" width="3.6" height="2" fill="#a0a0a0"/>
<rect x="1267.2" y="84.2" width="3.4" height="1.9" fill="#a0a0a0"/>
<rect x="1269" y="84.2" width="1.6" height="5.7" fill="#a0a0a0"/>
<rect x="1253.2" y="84.1" width="7.7" height="1.7" fill="#a0a0a0"/>
<rect x="1259.1" y="88.2" width="7.7" height="1.7" fill="#a0a0a0"/>
<rect x="1259.1" y="92.1" width="3.8" height="1.7" fill="#a0a0a0"/>
<rect x="1259.1" y="96" width="3.8" height="1.7" fill="#a0a0a0"/>
<rect x="1255.2" y="100.1" width="7.7" height="1.7" fill="#a0a0a0"/>
<path d="M1265.1 94.1 H1270.7 V97.9 H1273.1 V94.1 H1278.9 V99.3 H1276.7 V102 H1278.9 V107.8 H1273.1 V104 H1270.7 V107.8 H1265.1 V102 H1266.5 V99.3 H1265.1 Z" fill="#a0a0a0"/>
<rect x="1284.9" y="77.2" width="1.1" height="33.6" fill="#7a7a7a"/>

<!-- green run -->
<circle cx="1309.9" cy="93.8" r="11.9" fill="#34a02a"/>
<rect x="1301.9" y="89.9" width="2" height="5.8" fill="#fff"/>
<path d="M1306 89.9 H1309.9 V86 L1318 92.9 L1309.9 100 V95.7 H1306 Z" fill="#fff"/>
<rect x="1332" y="77.1" width="1" height="33.7" fill="#6e6e6e"/>

<!-- server icon -->
<rect x="1344.1" y="81" width="13.8" height="28" fill="#bcdcfa" stroke="#3a5c9c" stroke-width="2"/>
<rect x="1345" y="88.1" width="12" height="1.5" fill="#6080b8"/>
<rect x="1345" y="94.1" width="12" height="1.6" fill="#6080b8"/>
<rect x="1347" y="84.1" width="4" height="1.6" fill="#1a5a3a"/>
<rect x="1361" y="92" width="1.8" height="8.1" fill="#7890a0"/>
<rect x="1347" y="102.2" width="25.9" height="1.6" fill="#7a8fa8"/>
<rect x="1347" y="103.8" width="25.9" height="2.3" fill="#e8eef6"/>
<rect x="1347" y="106.1" width="25.9" height="1.5" fill="#5a6f88"/>
<rect x="1355" y="100.1" width="9.9" height="9.6" fill="url(#plugg)"/>
<rect x="1357" y="102" width="6" height="5" fill="#f8e48a"/>
<rect x="1355" y="107" width="9.9" height="2.7" fill="#b06418"/>

<!-- left arrow -->
<path d="M1383 93.9 L1394.1 82.8 H1395.8 V89 H1408 Q1409.8 89 1409.8 91 V96.7 Q1409.8 98.7 1408 98.7 H1395.8 V104.9 H1394.1 Z" fill="url(#arrg)" stroke="#bf8a1c" stroke-width="1.9" stroke-linejoin="round"/>
<polygon points="1424.9,91 1435.9,91 1430.4,97" fill="#000"/>
<!-- right arrow -->
<path d="M1479.4 93.9 L1468.3 82.8 H1466.6 V89 H1454.4 Q1452.6 89 1452.6 91 V96.7 Q1452.6 98.7 1454.4 98.7 H1466.6 V104.9 H1468.3 Z" fill="url(#arrg)" stroke="#bf8a1c" stroke-width="1.9" stroke-linejoin="round"/>
<polygon points="1492.7,91 1503.7,91 1498.2,97" fill="#000"/>

<!-- scrollbar strip -->
<rect x="1497" y="332" width="2" height="780" fill="#f0f0f0"/>
<rect x="1497" y="363" width="2" height="44" fill="#c8c8c8"/>
</svg>

</body></html>
